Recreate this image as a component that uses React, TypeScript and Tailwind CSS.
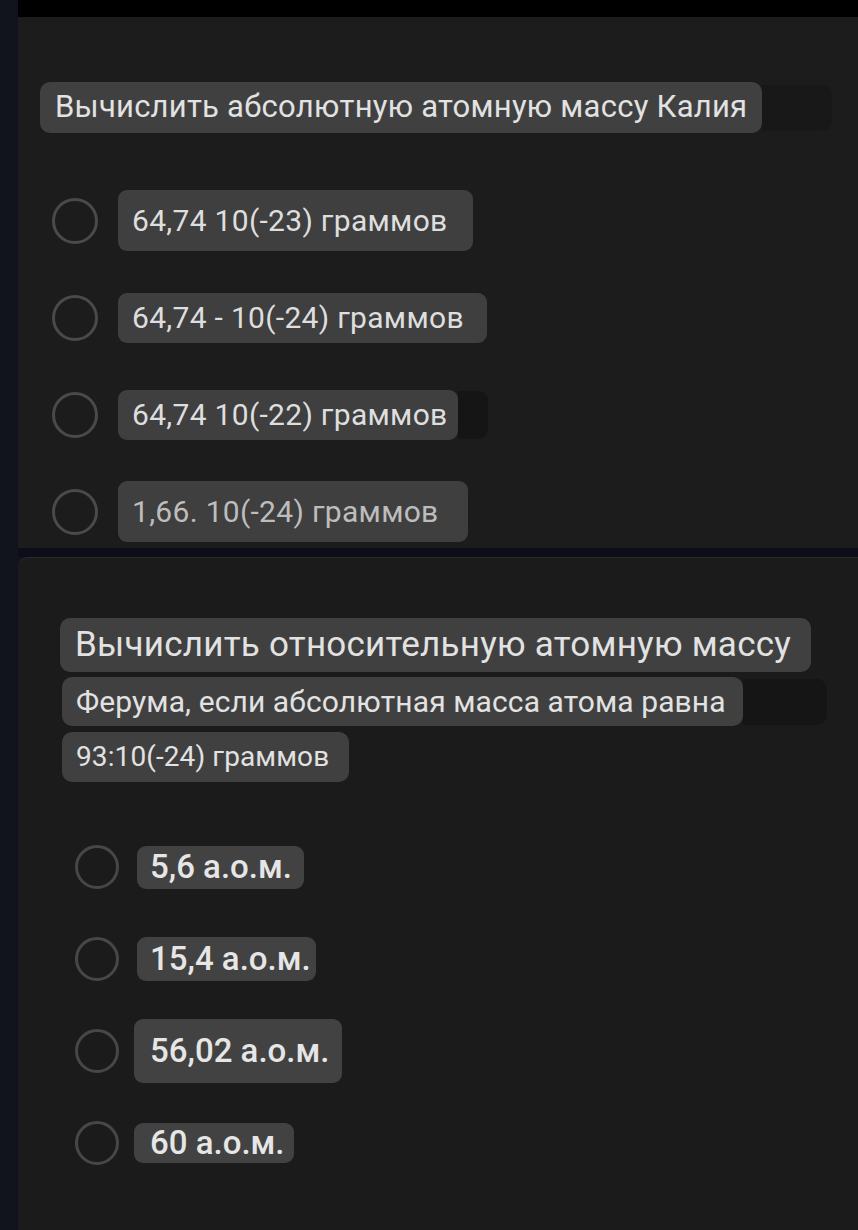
import React from 'react';

type Option = {
  text: string;
  chipH: string;
  extra?: string;
  ghost?: boolean;
  dim?: boolean;
};

const firstOptions: Option[] = [
  { text: '64,74 10(-23) граммов', chipH: 'h-[61px]', extra: 'pr-[25px]' },
  { text: '64,74 - 10(-24) граммов', chipH: 'h-[50px]', extra: 'pr-[23px]' },
  { text: '64,74 10(-22) граммов', chipH: 'h-[50px]', extra: 'pr-[10px]', ghost: true },
  { text: '1,66. 10(-24) граммов', chipH: 'h-[61px]', extra: 'pr-[29px]', dim: true },
];

const secondOptions: Option[] = [
  { text: '5,6 а.о.м.', chipH: 'h-[43px]', extra: 'pl-[13px] pr-[12px]' },
  { text: '15,4 а.о.м.', chipH: 'h-[44px]', extra: 'pl-[13px] pr-[5px]' },
  { text: '56,02 а.о.м.', chipH: 'h-[64px]', extra: 'ml-[-3px] pl-[16px] pr-[13px]' },
  { text: '60 а.о.м.', chipH: 'h-[40px]', extra: 'ml-[-3px] pl-[16px] pr-[9px]' },
];

const Radio = ({ size }: { size: 'lg' | 'md' }) => (
  <div
    className={
      size === 'lg'
        ? 'h-[46px] w-[46px] shrink-0 rounded-full border-[3px] border-[#4a4a4a]'
        : 'h-[44px] w-[44px] shrink-0 rounded-full border-[3px] border-[#474747]'
    }
  />
);

const FirstRow = ({ opt }: { opt: Option }) => (
  <div className="flex h-[61px] items-center">
    <div className="ml-[34px] mr-[20px]">
      <Radio size="lg" />
    </div>
    <div
      className={`flex ${opt.chipH} items-center whitespace-nowrap rounded-[9px] bg-[#3f3f3f] pl-[14px] text-[30px] tracking-[0.3px] ${
        opt.dim ? 'text-[#bdbdbd]' : 'text-[#dedede]'
      } ${opt.extra || ''}`}
    >
      {opt.text}
    </div>
    {opt.ghost && <div className="h-[48px] w-[30px] rounded-r-[9px] bg-[#151515]" />}
  </div>
);

const SecondRow = ({ opt }: { opt: Option }) => (
  <div className="flex h-[64px] items-center">
    <div className="ml-[57px] mr-[18px]">
      <Radio size="md" />
    </div>
    <div
      className={`flex ${opt.chipH} items-center whitespace-nowrap rounded-[9px] bg-[#424242] text-[33px] font-medium text-[#e6e6e6] ${
        opt.extra || ''
      }`}
    >
      {opt.text}
    </div>
  </div>
);

export default function App() {
  return (
    <div
      className="flex min-h-[1230px] w-[858px] overflow-hidden bg-[#11141c]"
      style={{ fontFamily: 'Roboto, "Noto Sans", sans-serif' }}
    >
      <div className="w-[18px] shrink-0" />
      <div className="flex flex-1 flex-col">
        {/* top bar */}
        <div className="h-[17px] bg-black" />

        {/* first question card */}
        <div className="flex h-[531px] flex-col bg-[#1c1c1c]">
          <div className="mt-[65px] flex items-center pl-[22px]">
            <div className="flex h-[51px] items-center whitespace-nowrap rounded-[10px] bg-[#404040] pl-[15px] pr-[15px] text-[31px] tracking-[0.25px] text-[#e2e2e2]">
              Вычислить абсолютную атомную массу Калия
            </div>
            <div className="h-[46px] w-[70px] rounded-r-[10px] bg-[#181818]" />
          </div>

          <div className="mt-[57px] flex flex-col gap-[36px]">
            {firstOptions.map((o) => (
              <FirstRow key={o.text} opt={o} />
            ))}
          </div>
        </div>

        {/* separator */}
        <div className="h-[9px] bg-[#0e0d1a]" />

        {/* second question card */}
        <div className="flex flex-1 flex-col rounded-tl-[10px] border-t border-[#2a2a2a] bg-[#1b1b1b]">
          <div className="mt-[60px] flex flex-col items-start gap-[5px] pl-[42px]">
            <div className="flex h-[54px] items-center whitespace-nowrap rounded-[10px] bg-[#404040] pl-[15px] pr-[20px] text-[35px] tracking-[0.25px] text-[#e2e2e2]">
              Вычислить относительную атомную массу
            </div>
            <div className="flex items-center">
              <div className="ml-[2px] flex h-[49px] items-center whitespace-nowrap rounded-[10px] bg-[#404040] pl-[14px] pr-[17px] text-[30px] tracking-[0.1px] text-[#e2e2e2]">
                Ферума, если абсолютная масса атома равна
              </div>
              <div className="h-[46px] w-[84px] rounded-r-[10px] bg-[#151515]" />
            </div>
            <div className="ml-[2px] mt-[1px] flex h-[50px] items-center whitespace-nowrap rounded-[10px] bg-[#404040] pl-[14px] pr-[20px] text-[28px] tracking-[0.1px] text-[#e2e2e2]">
              93:10(-24) граммов
            </div>
          </div>

          <div className="mt-[53px] flex flex-col gap-[28px] pb-[60px]">
            {secondOptions.map((o) => (
              <SecondRow key={o.text} opt={o} />
            ))}
          </div>
        </div>
      </div>
    </div>
  );
}
